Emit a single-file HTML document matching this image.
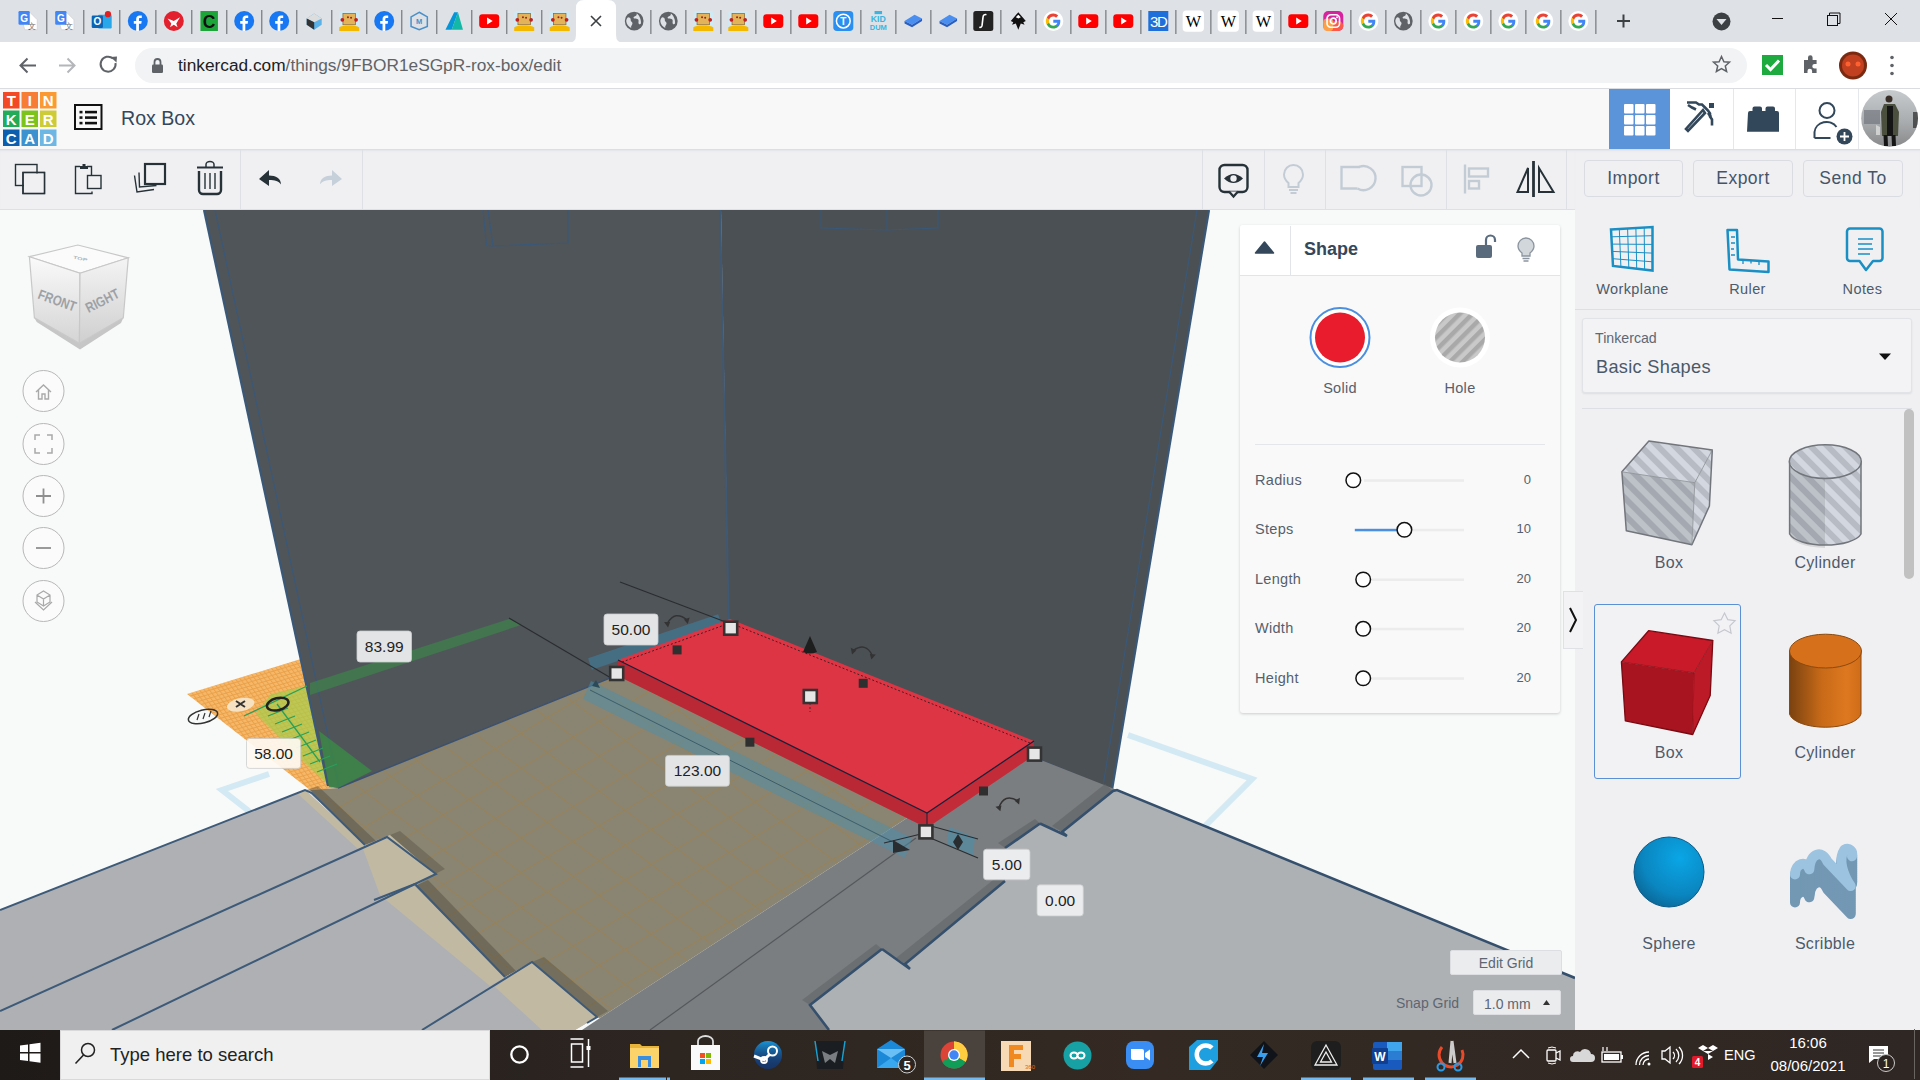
<!DOCTYPE html><html><head><meta charset="utf-8"><style>html,body{margin:0;padding:0;width:1920px;height:1080px;overflow:hidden;background:#fff;font-family:"Liberation Sans",sans-serif}div{box-sizing:border-box}</style></head><body>
<div style="position:absolute;left:0;top:0;width:1920px;height:42px;background:#dee1e6"></div>
<svg style="position:absolute;left:0;top:0" width="1920" height="43">
<path d="M568 43 Q576 43 576 35 V8 Q576 0 584 0 H608 Q616 0 616 8 V35 Q616 43 624 43 Z" fill="#fff"/>
<g transform="translate(28.5,21) scale(1.25) translate(-8,-8)"><path d="M1 1h8l6 6v8H5z" fill="#fff" stroke="#ccc" stroke-width=".5"/><rect x="0" y="0" width="9" height="11" rx="1" fill="#4285f4"/><text x="4.5" y="8.5" font-size="8" font-family="Liberation Sans" font-weight="bold" fill="#fff" text-anchor="middle">G</text><text x="11" y="14" font-size="6" fill="#666" font-family="Liberation Sans" text-anchor="middle">文</text></g>
<g transform="translate(65.2,21) scale(1.25) translate(-8,-8)"><path d="M1 1h8l6 6v8H5z" fill="#fff" stroke="#ccc" stroke-width=".5"/><rect x="0" y="0" width="9" height="11" rx="1" fill="#4285f4"/><text x="4.5" y="8.5" font-size="8" font-family="Liberation Sans" font-weight="bold" fill="#fff" text-anchor="middle">G</text><text x="11" y="14" font-size="6" fill="#666" font-family="Liberation Sans" text-anchor="middle">文</text></g>
<g transform="translate(101.7,21) scale(1.25) translate(-8,-8)"><rect x="5" y="3" width="11" height="11" rx="1" fill="#28a8ea"/><rect x="0" y="3.5" width="9" height="10" rx="1" fill="#0a64b6"/><text x="4.5" y="11.5" font-size="8" font-family="Liberation Sans" font-weight="bold" fill="#fff" text-anchor="middle">O</text><circle cx="13" cy="2.5" r="2.5" fill="#e02020"/></g>
<g transform="translate(137.8,21) scale(1.25) translate(-8,-8)"><circle cx="8" cy="8" r="8" fill="#1877f2"/><path d="M8.9 16V10.2h1.9l.3-2.2H8.9V6.6c0-.6.2-1 1.1-1h1.2V3.6c-.2 0-.9-.1-1.7-.1-1.7 0-2.8 1-2.8 2.9V8H4.8v2.2h1.9V16z" fill="#fff"/></g>
<g transform="translate(173.8,21) scale(1.25) translate(-8,-8)"><circle cx="8" cy="8" r="8" fill="#e3202e"/><path d="M3 6l5 2 5-3-3 5 1 3-3-2-3 2 1-3z" fill="#fff"/></g>
<g transform="translate(209.2,21) scale(1.25) translate(-8,-8)"><rect x="1" y="0" width="14" height="16" fill="#1ea53a"/><text x="8" y="13.5" font-size="14" font-family="Liberation Sans" font-weight="bold" fill="#111" text-anchor="middle">C</text></g>
<g transform="translate(244.2,21) scale(1.25) translate(-8,-8)"><circle cx="8" cy="8" r="8" fill="#1877f2"/><path d="M8.9 16V10.2h1.9l.3-2.2H8.9V6.6c0-.6.2-1 1.1-1h1.2V3.6c-.2 0-.9-.1-1.7-.1-1.7 0-2.8 1-2.8 2.9V8H4.8v2.2h1.9V16z" fill="#fff"/></g>
<g transform="translate(279.2,21) scale(1.25) translate(-8,-8)"><circle cx="8" cy="8" r="8" fill="#1877f2"/><path d="M8.9 16V10.2h1.9l.3-2.2H8.9V6.6c0-.6.2-1 1.1-1h1.2V3.6c-.2 0-.9-.1-1.7-.1-1.7 0-2.8 1-2.8 2.9V8H4.8v2.2h1.9V16z" fill="#fff"/></g>
<g transform="translate(314.2,21) scale(1.25) translate(-8,-8)"><path d="M2 6l6-4 6 4v5l-6 4-6-4z" fill="#5ab2e8"/><path d="M2 6l6-4 6 4-6 3z" fill="#ddd"/><path d="M2 6l6 3v6l-6-4z" fill="#333"/></g>
<g transform="translate(349.2,21) scale(1.25) translate(-8,-8)"><rect x="0" y="0" width="16" height="16" rx="2" fill="#cfeaf5"/><rect x="3" y="2" width="10" height="9" fill="#e3b35a" stroke="#8a6a30" stroke-width=".6"/><circle cx="2.5" cy="7" r="1.5" fill="#c02020"/><circle cx="13.5" cy="7" r="1.5" fill="#c02020"/><circle cx="7" cy="5" r=".8" fill="#a02020"/><circle cx="9.5" cy="5.3" r=".8" fill="#a02020"/><path d="M0 13c2-2 14-2 16 0v3H0z" fill="#f5b800"/></g>
<g transform="translate(384.2,21) scale(1.25) translate(-8,-8)"><circle cx="8" cy="8" r="8" fill="#1877f2"/><path d="M8.9 16V10.2h1.9l.3-2.2H8.9V6.6c0-.6.2-1 1.1-1h1.2V3.6c-.2 0-.9-.1-1.7-.1-1.7 0-2.8 1-2.8 2.9V8H4.8v2.2h1.9V16z" fill="#fff"/></g>
<g transform="translate(419.2,21) scale(1.25) translate(-8,-8)"><path d="M8 1l6.500 3.700v7.600L8 15 1.500 12.300V4.700z" fill="none" stroke="#4a90c8" stroke-width="1.2"/><text x="8" y="10.5" font-size="6" font-family="Liberation Sans" font-weight="bold" fill="#4a90c8" text-anchor="middle">M</text></g>
<g transform="translate(454.2,21) scale(1.25) translate(-8,-8)"><path d="M1 15L8 1h3l-5 14z" fill="#0696d7"/><path d="M6 15l5-14 4 14h-3z" fill="#14b8a6"/></g>
<g transform="translate(489.2,21) scale(1.25) translate(-8,-8)"><rect x="0" y="2.5" width="16" height="11" rx="2.5" fill="#f00"/><path d="M6.3 5.2v5.6L10.8 8z" fill="#fff"/></g>
<g transform="translate(524.2,21) scale(1.25) translate(-8,-8)"><rect x="0" y="0" width="16" height="16" rx="2" fill="#cfeaf5"/><rect x="3" y="2" width="10" height="9" fill="#e3b35a" stroke="#8a6a30" stroke-width=".6"/><circle cx="2.5" cy="7" r="1.5" fill="#c02020"/><circle cx="13.5" cy="7" r="1.5" fill="#c02020"/><circle cx="7" cy="5" r=".8" fill="#a02020"/><circle cx="9.5" cy="5.3" r=".8" fill="#a02020"/><path d="M0 13c2-2 14-2 16 0v3H0z" fill="#f5b800"/></g>
<g transform="translate(559.7,21) scale(1.25) translate(-8,-8)"><rect x="0" y="0" width="16" height="16" rx="2" fill="#cfeaf5"/><rect x="3" y="2" width="10" height="9" fill="#e3b35a" stroke="#8a6a30" stroke-width=".6"/><circle cx="2.5" cy="7" r="1.5" fill="#c02020"/><circle cx="13.5" cy="7" r="1.5" fill="#c02020"/><circle cx="7" cy="5" r=".8" fill="#a02020"/><circle cx="9.5" cy="5.3" r=".8" fill="#a02020"/><path d="M0 13c2-2 14-2 16 0v3H0z" fill="#f5b800"/></g>
<g transform="translate(634.2,21) scale(1.25) translate(-8,-8)"><circle cx="8" cy="8" r="7.5" fill="#5f6368"/><path d="M3 5c1.5 0 2.5 1 2.2 2.2C5 8.400 6.800 8.600 6.600 10 6.400 11.400 5 12 5.600 13.500 3.400 12.500 1.800 10.500 1.600 8 1.800 6.500 2.300 5.600 3 5zM10 2c.300 1.300-.600 2-1.800 2.300-1 .300-1 1.500 0 1.700 1.200.300 2.200-.100 3 .800.800 1-.200 2.200.400 3.300.500.800 1.300.500 1.800-.200.300-2.700-1.100-6.400-3.400-7.900z" fill="#dee1e6"/></g>
<g transform="translate(668.3,21) scale(1.25) translate(-8,-8)"><circle cx="8" cy="8" r="7.5" fill="#5f6368"/><path d="M3 5c1.5 0 2.5 1 2.2 2.2C5 8.400 6.800 8.600 6.600 10 6.400 11.400 5 12 5.600 13.500 3.400 12.500 1.800 10.500 1.600 8 1.800 6.500 2.300 5.600 3 5zM10 2c.300 1.300-.600 2-1.800 2.300-1 .300-1 1.500 0 1.700 1.200.300 2.200-.100 3 .800.800 1-.200 2.200.400 3.300.500.800 1.300.500 1.800-.200.300-2.700-1.100-6.400-3.400-7.900z" fill="#dee1e6"/></g>
<g transform="translate(703.3,21) scale(1.25) translate(-8,-8)"><rect x="0" y="0" width="16" height="16" rx="2" fill="#cfeaf5"/><rect x="3" y="2" width="10" height="9" fill="#e3b35a" stroke="#8a6a30" stroke-width=".6"/><circle cx="2.5" cy="7" r="1.5" fill="#c02020"/><circle cx="13.5" cy="7" r="1.5" fill="#c02020"/><circle cx="7" cy="5" r=".8" fill="#a02020"/><circle cx="9.5" cy="5.3" r=".8" fill="#a02020"/><path d="M0 13c2-2 14-2 16 0v3H0z" fill="#f5b800"/></g>
<g transform="translate(738.3,21) scale(1.25) translate(-8,-8)"><rect x="0" y="0" width="16" height="16" rx="2" fill="#cfeaf5"/><rect x="3" y="2" width="10" height="9" fill="#e3b35a" stroke="#8a6a30" stroke-width=".6"/><circle cx="2.5" cy="7" r="1.5" fill="#c02020"/><circle cx="13.5" cy="7" r="1.5" fill="#c02020"/><circle cx="7" cy="5" r=".8" fill="#a02020"/><circle cx="9.5" cy="5.3" r=".8" fill="#a02020"/><path d="M0 13c2-2 14-2 16 0v3H0z" fill="#f5b800"/></g>
<g transform="translate(773.3,21) scale(1.25) translate(-8,-8)"><rect x="0" y="2.5" width="16" height="11" rx="2.5" fill="#f00"/><path d="M6.3 5.2v5.6L10.8 8z" fill="#fff"/></g>
<g transform="translate(808.3,21) scale(1.25) translate(-8,-8)"><rect x="0" y="2.5" width="16" height="11" rx="2.5" fill="#f00"/><path d="M6.3 5.2v5.6L10.8 8z" fill="#fff"/></g>
<g transform="translate(843.3,21) scale(1.25) translate(-8,-8)"><rect x="0" y="0" width="16" height="16" rx="3" fill="#2a8ff0"/><circle cx="8" cy="8" r="5.500" fill="none" stroke="#fff" stroke-width="1.2"/><text x="8" y="11" font-size="8" font-family="Liberation Sans" font-weight="bold" fill="#fff" text-anchor="middle">T</text></g>
<g transform="translate(878.3,21) scale(1.25) translate(-8,-8)"><text x="8" y="9" font-size="7" font-family="Liberation Sans" font-weight="bold" fill="#3cb4e0" text-anchor="middle">KID</text><text x="8" y="15" font-size="6" font-family="Liberation Sans" font-weight="bold" fill="#3cb4e0" text-anchor="middle">DUM</text><rect x="5" y="0" width="6" height="2.500" fill="#3cb4e0"/></g>
<g transform="translate(913.3,21) scale(1.25) translate(-8,-8)"><path d="M1 8l8-5 6 3-8 5z" fill="#4a8ef0"/><path d="M1 8l6 3 8-5v2l-8 5-6-3z" fill="#2a5fc0"/></g>
<g transform="translate(948.3,21) scale(1.25) translate(-8,-8)"><path d="M1 8l8-5 6 3-8 5z" fill="#4a8ef0"/><path d="M1 8l6 3 8-5v2l-8 5-6-3z" fill="#2a5fc0"/></g>
<g transform="translate(983.3,21) scale(1.25) translate(-8,-8)"><rect x="0" y="0" width="16" height="16" rx="2" fill="#222"/><path d="M10.500 3c-1.500-.5-2.500 .300-2.700 1.800L7 11.500c-.2 1.300-1 1.800-2.200 1.500" stroke="#fff" stroke-width="1.300" fill="none"/></g>
<g transform="translate(1018.3,21) scale(1.25) translate(-8,-8)"><path d="M8 1l6 7-2 1 1 2-3-1-2 5-2-5-3 1 1-2-2-1z" fill="#111"/><path d="M6 5l2-2 2 2-2 1z" fill="#fff"/></g>
<g transform="translate(1053.3,21) scale(1.25) translate(-8,-8)"><circle cx="8" cy="8" r="8" fill="#fff"/><path d="M13.6 8.2c0-.4 0-.8-.1-1.2H8v2.3h3.2c-.1.7-.6 1.4-1.2 1.8v1.5h1.9c1.1-1 1.7-2.6 1.7-4.4z" fill="#4285f4"/><path d="M8 14c1.6 0 2.9-.5 3.9-1.4L10 11.1c-.5.4-1.2.6-2 .6-1.5 0-2.8-1-3.3-2.4H2.8v1.5C3.8 12.8 5.7 14 8 14z" fill="#34a853"/><path d="M4.7 9.3c-.1-.4-.2-.8-.2-1.3s.1-.9.2-1.3V5.2H2.8C2.3 6 2 7 2 8s.3 2 .8 2.8z" fill="#fbbc05"/><path d="M8 4.4c.9 0 1.6.3 2.2.9l1.7-1.7C10.9 2.600 9.6 2 8 2 5.700 2 3.800 3.200 2.800 5.200l1.900 1.500C5.200 5.400 6.500 4.400 8 4.400z" fill="#ea4335"/></g>
<g transform="translate(1088.3,21) scale(1.25) translate(-8,-8)"><rect x="0" y="2.5" width="16" height="11" rx="2.5" fill="#f00"/><path d="M6.3 5.2v5.6L10.8 8z" fill="#fff"/></g>
<g transform="translate(1123.3,21) scale(1.25) translate(-8,-8)"><rect x="0" y="2.5" width="16" height="11" rx="2.5" fill="#f00"/><path d="M6.3 5.2v5.6L10.8 8z" fill="#fff"/></g>
<g transform="translate(1158.3,21) scale(1.25) translate(-8,-8)"><rect x="0" y="0" width="16" height="16" fill="#1e6fd9"/><text x="8" y="13" font-size="12" font-family="Liberation Sans" fill="#fff" text-anchor="middle" letter-spacing="-1">3D</text></g>
<g transform="translate(1193.3,21) scale(1.25) translate(-8,-8)"><rect x="-.5" y="-.5" width="17" height="17" rx="3" fill="#fff"/><text x="8" y="13" font-size="13" font-family="Liberation Serif" fill="#000" text-anchor="middle">W</text></g>
<g transform="translate(1228.3,21) scale(1.25) translate(-8,-8)"><rect x="-.5" y="-.5" width="17" height="17" rx="3" fill="#fff"/><text x="8" y="13" font-size="13" font-family="Liberation Serif" fill="#000" text-anchor="middle">W</text></g>
<g transform="translate(1263.3,21) scale(1.25) translate(-8,-8)"><rect x="-.5" y="-.5" width="17" height="17" rx="3" fill="#fff"/><text x="8" y="13" font-size="13" font-family="Liberation Serif" fill="#000" text-anchor="middle">W</text></g>
<g transform="translate(1298.3,21) scale(1.25) translate(-8,-8)"><rect x="0" y="2.5" width="16" height="11" rx="2.5" fill="#f00"/><path d="M6.3 5.2v5.6L10.8 8z" fill="#fff"/></g>
<g transform="translate(1333.3,21) scale(1.25) translate(-8,-8)"><rect x="0" y="0" width="16" height="16" rx="4" fill="#d6249f"/><rect x="0" y="8" width="16" height="8" rx="4" fill="#fd5949"/><rect x="0" y="6" width="8" height="10" rx="3" fill="#fdb34a" opacity=".8"/><rect x="3" y="3" width="10" height="10" rx="3" fill="none" stroke="#fff" stroke-width="1.300"/><circle cx="8" cy="8" r="2.300" fill="none" stroke="#fff" stroke-width="1.300"/><circle cx="11" cy="5" r=".8" fill="#fff"/></g>
<g transform="translate(1368.3,21) scale(1.25) translate(-8,-8)"><circle cx="8" cy="8" r="8" fill="#fff"/><path d="M13.6 8.2c0-.4 0-.8-.1-1.2H8v2.3h3.2c-.1.7-.6 1.4-1.2 1.8v1.5h1.9c1.1-1 1.7-2.6 1.7-4.4z" fill="#4285f4"/><path d="M8 14c1.6 0 2.9-.5 3.9-1.4L10 11.1c-.5.4-1.2.6-2 .6-1.5 0-2.8-1-3.3-2.4H2.8v1.5C3.8 12.8 5.7 14 8 14z" fill="#34a853"/><path d="M4.7 9.3c-.1-.4-.2-.8-.2-1.3s.1-.9.2-1.3V5.2H2.8C2.3 6 2 7 2 8s.3 2 .8 2.8z" fill="#fbbc05"/><path d="M8 4.4c.9 0 1.6.3 2.2.9l1.7-1.7C10.9 2.600 9.6 2 8 2 5.700 2 3.800 3.200 2.800 5.200l1.900 1.500C5.200 5.400 6.500 4.400 8 4.400z" fill="#ea4335"/></g>
<g transform="translate(1403.3,21) scale(1.25) translate(-8,-8)"><circle cx="8" cy="8" r="7.5" fill="#5f6368"/><path d="M3 5c1.5 0 2.5 1 2.2 2.2C5 8.400 6.800 8.600 6.600 10 6.400 11.400 5 12 5.600 13.500 3.400 12.500 1.800 10.500 1.600 8 1.800 6.500 2.300 5.600 3 5zM10 2c.300 1.300-.600 2-1.800 2.300-1 .300-1 1.500 0 1.700 1.200.300 2.200-.100 3 .800.800 1-.200 2.200.400 3.300.500.800 1.300.500 1.800-.200.300-2.700-1.100-6.400-3.400-7.900z" fill="#dee1e6"/></g>
<g transform="translate(1438.3,21) scale(1.25) translate(-8,-8)"><circle cx="8" cy="8" r="8" fill="#fff"/><path d="M13.6 8.2c0-.4 0-.8-.1-1.2H8v2.3h3.2c-.1.7-.6 1.4-1.2 1.8v1.5h1.9c1.1-1 1.7-2.6 1.7-4.4z" fill="#4285f4"/><path d="M8 14c1.6 0 2.9-.5 3.9-1.4L10 11.1c-.5.4-1.2.6-2 .6-1.5 0-2.8-1-3.3-2.4H2.8v1.5C3.8 12.8 5.7 14 8 14z" fill="#34a853"/><path d="M4.7 9.3c-.1-.4-.2-.8-.2-1.3s.1-.9.2-1.3V5.2H2.8C2.3 6 2 7 2 8s.3 2 .8 2.8z" fill="#fbbc05"/><path d="M8 4.4c.9 0 1.6.3 2.2.9l1.7-1.7C10.9 2.600 9.6 2 8 2 5.700 2 3.800 3.200 2.800 5.200l1.900 1.500C5.200 5.400 6.500 4.400 8 4.400z" fill="#ea4335"/></g>
<g transform="translate(1473.3,21) scale(1.25) translate(-8,-8)"><circle cx="8" cy="8" r="8" fill="#fff"/><path d="M13.6 8.2c0-.4 0-.8-.1-1.2H8v2.3h3.2c-.1.7-.6 1.4-1.2 1.8v1.5h1.9c1.1-1 1.7-2.6 1.7-4.4z" fill="#4285f4"/><path d="M8 14c1.6 0 2.9-.5 3.9-1.4L10 11.1c-.5.4-1.2.6-2 .6-1.5 0-2.8-1-3.3-2.4H2.8v1.5C3.8 12.8 5.7 14 8 14z" fill="#34a853"/><path d="M4.7 9.3c-.1-.4-.2-.8-.2-1.3s.1-.9.2-1.3V5.2H2.8C2.3 6 2 7 2 8s.3 2 .8 2.8z" fill="#fbbc05"/><path d="M8 4.4c.9 0 1.6.3 2.2.9l1.7-1.7C10.9 2.600 9.6 2 8 2 5.700 2 3.800 3.200 2.800 5.200l1.900 1.500C5.200 5.400 6.500 4.400 8 4.400z" fill="#ea4335"/></g>
<g transform="translate(1508.3,21) scale(1.25) translate(-8,-8)"><circle cx="8" cy="8" r="8" fill="#fff"/><path d="M13.6 8.2c0-.4 0-.8-.1-1.2H8v2.3h3.2c-.1.7-.6 1.4-1.2 1.8v1.5h1.9c1.1-1 1.7-2.6 1.7-4.4z" fill="#4285f4"/><path d="M8 14c1.6 0 2.9-.5 3.9-1.4L10 11.1c-.5.4-1.2.6-2 .6-1.5 0-2.8-1-3.3-2.4H2.8v1.5C3.8 12.8 5.7 14 8 14z" fill="#34a853"/><path d="M4.7 9.3c-.1-.4-.2-.8-.2-1.3s.1-.9.2-1.3V5.2H2.8C2.3 6 2 7 2 8s.3 2 .8 2.8z" fill="#fbbc05"/><path d="M8 4.4c.9 0 1.6.3 2.2.9l1.7-1.7C10.9 2.600 9.6 2 8 2 5.700 2 3.800 3.200 2.800 5.200l1.900 1.500C5.200 5.400 6.500 4.400 8 4.400z" fill="#ea4335"/></g>
<g transform="translate(1543.3,21) scale(1.25) translate(-8,-8)"><circle cx="8" cy="8" r="8" fill="#fff"/><path d="M13.6 8.2c0-.4 0-.8-.1-1.2H8v2.3h3.2c-.1.7-.6 1.4-1.2 1.8v1.5h1.9c1.1-1 1.7-2.6 1.7-4.4z" fill="#4285f4"/><path d="M8 14c1.6 0 2.9-.5 3.9-1.4L10 11.1c-.5.4-1.2.6-2 .6-1.5 0-2.8-1-3.3-2.4H2.8v1.5C3.8 12.8 5.7 14 8 14z" fill="#34a853"/><path d="M4.7 9.3c-.1-.4-.2-.8-.2-1.3s.1-.9.2-1.3V5.2H2.8C2.3 6 2 7 2 8s.3 2 .8 2.8z" fill="#fbbc05"/><path d="M8 4.4c.9 0 1.6.3 2.2.9l1.7-1.7C10.9 2.600 9.6 2 8 2 5.700 2 3.800 3.200 2.800 5.200l1.900 1.500C5.200 5.400 6.500 4.400 8 4.400z" fill="#ea4335"/></g>
<g transform="translate(1578.3,21) scale(1.25) translate(-8,-8)"><circle cx="8" cy="8" r="8" fill="#fff"/><path d="M13.6 8.2c0-.4 0-.8-.1-1.2H8v2.3h3.2c-.1.7-.6 1.4-1.2 1.8v1.5h1.9c1.1-1 1.7-2.6 1.7-4.4z" fill="#4285f4"/><path d="M8 14c1.6 0 2.9-.5 3.9-1.4L10 11.1c-.5.4-1.2.6-2 .6-1.5 0-2.8-1-3.3-2.4H2.8v1.5C3.8 12.8 5.7 14 8 14z" fill="#34a853"/><path d="M4.7 9.3c-.1-.4-.2-.8-.2-1.3s.1-.9.2-1.3V5.2H2.8C2.3 6 2 7 2 8s.3 2 .8 2.8z" fill="#fbbc05"/><path d="M8 4.4c.9 0 1.6.3 2.2.9l1.7-1.7C10.9 2.600 9.6 2 8 2 5.700 2 3.800 3.200 2.800 5.200l1.900 1.500C5.200 5.400 6.500 4.400 8 4.400z" fill="#ea4335"/></g>
<rect x="46.1" y="10" width="1.3" height="24" fill="#7d8186"/>
<rect x="83.1" y="10" width="1.3" height="24" fill="#7d8186"/>
<rect x="119.1" y="10" width="1.3" height="24" fill="#7d8186"/>
<rect x="155.2" y="10" width="1.3" height="24" fill="#7d8186"/>
<rect x="191.1" y="10" width="1.3" height="24" fill="#7d8186"/>
<rect x="226.1" y="10" width="1.3" height="24" fill="#7d8186"/>
<rect x="261.1" y="10" width="1.3" height="24" fill="#7d8186"/>
<rect x="296.1" y="10" width="1.3" height="24" fill="#7d8186"/>
<rect x="331.1" y="10" width="1.3" height="24" fill="#7d8186"/>
<rect x="366.1" y="10" width="1.3" height="24" fill="#7d8186"/>
<rect x="401.1" y="10" width="1.3" height="24" fill="#7d8186"/>
<rect x="436.1" y="10" width="1.3" height="24" fill="#7d8186"/>
<rect x="471.1" y="10" width="1.3" height="24" fill="#7d8186"/>
<rect x="506.1" y="10" width="1.3" height="24" fill="#7d8186"/>
<rect x="541.1" y="10" width="1.3" height="24" fill="#7d8186"/>
<rect x="650.2" y="10" width="1.3" height="24" fill="#7d8186"/>
<rect x="685.2" y="10" width="1.3" height="24" fill="#7d8186"/>
<rect x="720.2" y="10" width="1.3" height="24" fill="#7d8186"/>
<rect x="755.2" y="10" width="1.3" height="24" fill="#7d8186"/>
<rect x="790.2" y="10" width="1.3" height="24" fill="#7d8186"/>
<rect x="825.2" y="10" width="1.3" height="24" fill="#7d8186"/>
<rect x="860.2" y="10" width="1.3" height="24" fill="#7d8186"/>
<rect x="895.2" y="10" width="1.3" height="24" fill="#7d8186"/>
<rect x="930.2" y="10" width="1.3" height="24" fill="#7d8186"/>
<rect x="965.2" y="10" width="1.3" height="24" fill="#7d8186"/>
<rect x="1000.2" y="10" width="1.3" height="24" fill="#7d8186"/>
<rect x="1035.2" y="10" width="1.3" height="24" fill="#7d8186"/>
<rect x="1070.2" y="10" width="1.3" height="24" fill="#7d8186"/>
<rect x="1105.2" y="10" width="1.3" height="24" fill="#7d8186"/>
<rect x="1140.2" y="10" width="1.3" height="24" fill="#7d8186"/>
<rect x="1175.2" y="10" width="1.3" height="24" fill="#7d8186"/>
<rect x="1210.2" y="10" width="1.3" height="24" fill="#7d8186"/>
<rect x="1245.2" y="10" width="1.3" height="24" fill="#7d8186"/>
<rect x="1280.2" y="10" width="1.3" height="24" fill="#7d8186"/>
<rect x="1315.2" y="10" width="1.3" height="24" fill="#7d8186"/>
<rect x="1350.2" y="10" width="1.3" height="24" fill="#7d8186"/>
<rect x="1385.2" y="10" width="1.3" height="24" fill="#7d8186"/>
<rect x="1420.2" y="10" width="1.3" height="24" fill="#7d8186"/>
<rect x="1455.2" y="10" width="1.3" height="24" fill="#7d8186"/>
<rect x="1490.2" y="10" width="1.3" height="24" fill="#7d8186"/>
<rect x="1525.2" y="10" width="1.3" height="24" fill="#7d8186"/>
<rect x="1560.2" y="10" width="1.3" height="24" fill="#7d8186"/>
<rect x="1595.2" y="10" width="1.3" height="24" fill="#7d8186"/>
<path d="M591 16 L601 26 M601 16 L591 26" stroke="#3c4043" stroke-width="1.6"/>
<path d="M1617 21h13M1623.500 14.500v13" stroke="#3c4043" stroke-width="2"/>
<circle cx="1721.500" cy="21.500" r="9" fill="#3c4043"/><path d="M1716.500 19h10l-5 6z" fill="#dee1e6"/>
<path d="M1772 18.500h11" stroke="#111" stroke-width="1"/>
<rect x="1827.500" y="15.500" width="10" height="10" fill="none" stroke="#111" stroke-width="1"/><path d="M1829.500 15.500v-2.500h10.500v10.500h-2.500" fill="none" stroke="#111" stroke-width="1"/>
<path d="M1885 13l12 12M1897 13l-12 12" stroke="#111" stroke-width="1"/>
</svg>
<div style="position:absolute;left:0;top:42px;width:1920px;height:47px;background:#fff;border-bottom:1px solid #dadce0"></div>
<div style="position:absolute;left:135px;top:48px;width:1612px;height:35px;border-radius:18px;background:#f1f3f4"></div>
<svg style="position:absolute;left:0;top:42px" width="1920" height="46">
<path d="M36 23.500H21M27.500 16.500l-7 7 7 7" fill="none" stroke="#5f6368" stroke-width="2"/>
<path d="M59 23.500h15M67.500 16.500l7 7-7 7" fill="none" stroke="#b4b6b9" stroke-width="2"/>
<path d="M115.500 21A7.500 7.500 0 1 1 113 16.500" fill="none" stroke="#5f6368" stroke-width="2"/><path d="M110.500 15L117 14.500 116.500 20.500z" fill="#5f6368"/>
<rect x="152" y="22.500" width="11" height="8.500" rx="1.200" fill="#5f6368"/><path d="M154.500 23v-3a3 3 0 0 1 6 0v3" fill="none" stroke="#5f6368" stroke-width="1.800"/>
<path d="M1721.500 14.500l2.400 5.200 5.600.5-4.200 3.800 1.300 5.500-5.100-3-5.100 3 1.300-5.500-4.200-3.800 5.600-.5z" fill="none" stroke="#5f6368" stroke-width="1.500"/>
<rect x="1762" y="13" width="21" height="20" fill="#1faa3f"/><path d="M1766 23l4.500 4.500 8.500-9" fill="none" stroke="#fff" stroke-width="3"/>
<path d="M1804 18h4v-2.500a2.300 2.300 0 0 1 4.600 0V18h4v4h-2a2.300 2.300 0 0 0 0 4.600h2V31h-4.500v-2a2.300 2.300 0 0 0-4.600 0v2H1804z" fill="#5f6368"/>
<circle cx="1853" cy="23.500" r="14" fill="#7a2a10"/><circle cx="1853" cy="23.500" r="11" fill="#c04020"/><circle cx="1848" cy="22" r="2.500" fill="#ff6030"/><circle cx="1858" cy="22" r="2.500" fill="#ff6030"/>
<circle cx="1892" cy="15.500" r="1.800" fill="#5f6368"/><circle cx="1892" cy="23.500" r="1.800" fill="#5f6368"/><circle cx="1892" cy="31.500" r="1.800" fill="#5f6368"/>
</svg>
<div style="position:absolute;left:178px;top:53px;font-size:17.3px;line-height:24px;color:#5f6368;white-space:nowrap"><span style="color:#202124">tinkercad.com</span>/things/9FBOR1eSGpR-rox-box/edit</div>
<div style="position:absolute;left:0;top:89px;width:1920px;height:61px;background:#f8f8f8;border-bottom:1px solid #dcdee6"></div>
<div style="position:absolute;left:1670px;top:89px;width:250px;height:60px;background:#fff"></div>
<svg style="position:absolute;left:0;top:0" width="1920" height="212">
<rect x="3" y="92" width="16.5" height="16.5" fill="#f34a25"/>
<text x="11.25" y="106" font-size="15" font-weight="bold" font-family="Liberation Sans" fill="#fff" text-anchor="middle">T</text>
<rect x="21.5" y="92" width="16.5" height="16.5" fill="#f67d33"/>
<text x="29.75" y="106" font-size="15" font-weight="bold" font-family="Liberation Sans" fill="#fff" text-anchor="middle">I</text>
<rect x="40" y="92" width="16.5" height="16.5" fill="#fb9a35"/>
<text x="48.25" y="106" font-size="15" font-weight="bold" font-family="Liberation Sans" fill="#fff" text-anchor="middle">N</text>
<rect x="3" y="110.5" width="16.5" height="16.5" fill="#22ab58"/>
<text x="11.25" y="124.5" font-size="15" font-weight="bold" font-family="Liberation Sans" fill="#fff" text-anchor="middle">K</text>
<rect x="21.5" y="110.5" width="16.5" height="16.5" fill="#7cc31b"/>
<text x="29.75" y="124.5" font-size="15" font-weight="bold" font-family="Liberation Sans" fill="#fff" text-anchor="middle">E</text>
<rect x="40" y="110.5" width="16.5" height="16.5" fill="#cdcb38"/>
<text x="48.25" y="124.5" font-size="15" font-weight="bold" font-family="Liberation Sans" fill="#fff" text-anchor="middle">R</text>
<rect x="3" y="129.5" width="16.5" height="16.5" fill="#0b5fae"/>
<text x="11.25" y="143.5" font-size="15" font-weight="bold" font-family="Liberation Sans" fill="#fff" text-anchor="middle">C</text>
<rect x="21.5" y="129.5" width="16.5" height="16.5" fill="#3c91cf"/>
<text x="29.75" y="143.5" font-size="15" font-weight="bold" font-family="Liberation Sans" fill="#fff" text-anchor="middle">A</text>
<rect x="40" y="129.5" width="16.5" height="16.5" fill="#6cb7e3"/>
<text x="48.25" y="143.5" font-size="15" font-weight="bold" font-family="Liberation Sans" fill="#fff" text-anchor="middle">D</text>
<rect x="75" y="105" width="26.500" height="24" fill="none" stroke="#111" stroke-width="2"/>
<rect x="79.500" y="110.8" width="3" height="2.600" fill="#111"/><rect x="85" y="110.8" width="12" height="2.600" fill="#111"/>
<rect x="79.500" y="116.3" width="3" height="2.600" fill="#111"/><rect x="85" y="116.3" width="12" height="2.600" fill="#111"/>
<rect x="79.500" y="121.8" width="3" height="2.600" fill="#111"/><rect x="85" y="121.8" width="12" height="2.600" fill="#111"/>
<rect x="1609" y="89" width="61" height="60" fill="#5c94d9"/>
<rect x="1624" y="104" width="9.500" height="9.500" rx="1" fill="#fff"/>
<rect x="1635" y="104" width="9.500" height="9.500" rx="1" fill="#fff"/>
<rect x="1646" y="104" width="9.500" height="9.500" rx="1" fill="#fff"/>
<rect x="1624" y="115" width="9.500" height="9.500" rx="1" fill="#fff"/>
<rect x="1635" y="115" width="9.500" height="9.500" rx="1" fill="#fff"/>
<rect x="1646" y="115" width="9.500" height="9.500" rx="1" fill="#fff"/>
<rect x="1624" y="126" width="9.500" height="9.500" rx="1" fill="#fff"/>
<rect x="1635" y="126" width="9.500" height="9.500" rx="1" fill="#fff"/>
<rect x="1646" y="126" width="9.500" height="9.500" rx="1" fill="#fff"/>
<rect x="1733" y="89" width="1" height="60" fill="#e4e7eb"/>
<rect x="1795" y="89" width="1" height="60" fill="#e4e7eb"/>
<rect x="1858" y="89" width="1" height="60" fill="#e4e7eb"/>
<g fill="none" stroke="#33475b" stroke-width="2.600"><path d="M1687 102.500h9l3 2h3l3 3 3 3 2 3v3l2 3v6"/><path d="M1688 105l4 2.500 4 2"/><path d="M1708 113l3 4"/><path d="M1703 110l-17 19 2 2 17-18z"/></g><rect x="1709" y="103" width="5" height="5" fill="#33475b"/>
<path d="M1748 113a2 2 0 0 1 2-2h2.500v-2.500a2 2 0 0 1 2-2h5.500a2 2 0 0 1 2 2v2.500h3.500v-2.500a2 2 0 0 1 2-2h5.500a2 2 0 0 1 2 2v2.500h2a2 2 0 0 1 2 2v18.700h-32z" fill="#33475b"/>
<circle cx="1827" cy="110.500" r="7.500" fill="none" stroke="#33475b" stroke-width="2"/><path d="M1814.500 138v-6a12 11 0 0 1 22-5" fill="none" stroke="#33475b" stroke-width="2"/><path d="M1814.500 138h16" stroke="#33475b" stroke-width="2"/>
<circle cx="1844.500" cy="136.500" r="8" fill="#33475b"/><path d="M1840 136.500h9M1844.500 132v9" stroke="#fff" stroke-width="1.800"/>
<defs><linearGradient id="avg" x1="0" y1="0" x2="0" y2="1"><stop offset="0" stop-color="#c9cccf"/><stop offset=".55" stop-color="#a9acae"/><stop offset="1" stop-color="#858688"/></linearGradient><clipPath id="avc"><circle cx="1889.600" cy="118.300" r="28.400"/></clipPath></defs>
<g clip-path="url(#avc)"><rect x="1860" y="89" width="60" height="60" fill="url(#avg)"/><rect x="1864" y="110" width="16" height="14" fill="#6a6e76" opacity=".6"/><rect x="1913" y="112" width="6" height="16" fill="#2a2a2a" opacity=".7"/>
<path d="M1884 104h11l4 8-1 24h-16l-1-24z" fill="#4a4f3e"/><rect x="1887" y="106" width="6" height="30" fill="#151515"/><path d="M1883.500 135h4l.5 11h-4zM1891.500 135h4l.5 11h-4z" fill="#151515"/><circle cx="1889" cy="99" r="3.500" fill="#3a2e28"/><path d="M1876 125l4 2v8h-4z" fill="#dcdcdc" opacity=".8"/></g>
</svg>
<div style="position:absolute;left:121px;top:103px;font-size:19.6px;line-height:30px;color:#34475b;white-space:nowrap">Rox Box</div>
<div style="position:absolute;left:0;top:150px;width:1575px;height:60px;background:#f0f0f3;border-bottom:1px solid #dde0e5;box-shadow:inset 0 2px 2px -1px #e2e4ea"></div>
<div style="position:absolute;left:1575px;top:150px;width:345px;height:60px;background:#f0f0f3;box-shadow:inset 0 2px 2px -1px #e2e4ea"></div>
<svg style="position:absolute;left:0;top:150px" width="1920" height="60">
<rect x="240" y="0" width="1" height="59" fill="#dde0e5"/>
<rect x="362" y="0" width="1" height="59" fill="#dde0e5"/>
<rect x="1202" y="0" width="1" height="59" fill="#dde0e5"/>
<rect x="1264" y="0" width="1" height="59" fill="#dde0e5"/>
<rect x="1325" y="0" width="1" height="59" fill="#dde0e5"/>
<rect x="1446" y="0" width="1" height="59" fill="#dde0e5"/>
<rect x="1566" y="0" width="1" height="59" fill="#dde0e5"/>
<g fill="none" stroke="#263238" stroke-width="1.400"><rect x="15.500" y="14.500" width="21.500" height="21"/><rect x="23" y="22.500" width="21.500" height="21"/></g>
<rect x="24" y="23.500" width="19.500" height="19" fill="#f0f0f3"/>
<rect x="23" y="22.500" width="21.500" height="21" fill="none" stroke="#263238" stroke-width="1.400"/>
<g fill="none" stroke="#263238" stroke-width="1.400"><path d="M80 16.500h-4.500v27h16.500v-2"/><path d="M87 16.500h4.500v9"/><rect x="87.500" y="25.500" width="13.500" height="13"/></g><path d="M80 19h8v-3h-2.500v-2h-3v2H80z" fill="#263238"/>
<g fill="none" stroke="#263238"><rect x="145" y="14" width="20" height="20" stroke-width="2.200"/><path d="M139 22.500l.5 14.500 17-1.500" stroke-width="1.400"/><path d="M134.500 25.500l2.500 16.500 17-2.500" stroke-width="1.400"/></g>
<g fill="none" stroke="#263238" transform="translate(0,2)"><path d="M197 15.500h26" stroke-width="2"/><path d="M206 15v-2.500a4 3 0 0 1 8 0V15" stroke-width="1.500"/><path d="M199 19v19a4 4 0 0 0 4 4h14a4 4 0 0 0 4-4V19" stroke-width="2.400"/><path d="M205 21v16M210 21v16M215 21v16" stroke-width="1.400"/></g>
<path d="M259 29l10-9v5.500c7 0 12 3 12 9-2.500-3.500-6-4.500-12-4.500v6z" fill="#263238"/>
<path d="M342 29l-10-9v5.500c-7 0-12 3-12 9 2.500-3.500 6-4.500 12-4.500v6z" fill="#c5d0da"/>
<rect x="1219.500" y="15" width="28" height="27" rx="5" fill="none" stroke="#263238" stroke-width="2.400"/><path d="M1229 41.500l4.500 5 4.500-5" fill="#f0f0f3" stroke="#263238" stroke-width="2.200"/><path d="M1224 28.500q9.500-9 19 0q-9.500 9-19 0z" fill="#263238"/><circle cx="1233.500" cy="28.500" r="3.200" fill="#f0f0f3"/>
<g fill="none" stroke="#c3ccd5" stroke-width="2"><path d="M1288.500 37v-4c-3-2.500-4.500-5-4.500-8.500a9.500 9.500 0 0 1 19 0c0 3.500-1.500 6-4.500 8.500v4z"/><path d="M1289 40h9M1290.500 43h6"/></g>
<g fill="none" stroke="#c3ccd5" stroke-width="2.400"><path d="M1360 17h-18.500v21.500h16"/><path d="M1359 17a12 12 0 1 1-1.500 21.500"/></g>
<g fill="none" stroke="#c3ccd5" stroke-width="2.400"><rect x="1402.500" y="17" width="19" height="19"/><circle cx="1421" cy="35" r="10.500"/></g>
<g fill="none" stroke="#c3ccd5" stroke-width="2.400"><path d="M1465 14.500v29"/><rect x="1469" y="18.500" width="19" height="8"/><rect x="1469" y="31" width="10" height="7.500"/></g>
<g fill="none" stroke="#263238" stroke-width="2"><path d="M1533.500 11v36" stroke-width="2.800"/><path d="M1528 42h-10.500l10.500-24z"/><path d="M1539 42h14.500l-14.500-24z"/></g>
</svg>
<div style="position:absolute;left:1584px;top:160px;width:99px;height:37px;border:1px solid #d9dde3;border-radius:4px;color:#44556a;font-size:17.5px;line-height:34px;text-align:center;letter-spacing:0.5px">Import</div>
<div style="position:absolute;left:1693px;top:160px;width:100px;height:37px;border:1px solid #d9dde3;border-radius:4px;color:#44556a;font-size:17.5px;line-height:34px;text-align:center;letter-spacing:0.5px">Export</div>
<div style="position:absolute;left:1803px;top:160px;width:100px;height:37px;border:1px solid #d9dde3;border-radius:4px;color:#44556a;font-size:17.5px;line-height:34px;text-align:center;letter-spacing:0.5px">Send To</div>
<svg style="position:absolute;left:0;top:0" width="1575" height="1030" viewBox="0 0 1575 1030">
<defs>
<clipPath id="vp"><rect x="0" y="210" width="1575" height="820"/></clipPath>
<pattern id="fgrid" patternUnits="userSpaceOnUse" width="26" height="26" patternTransform="matrix(1,-0.6,1,0.74,0,0)">
<rect width="26" height="26" fill="#8a8572"/><path d="M0 0.5H26M0.5 0V26" stroke="#96825a" stroke-width="1"/></pattern>
<pattern id="ogrid" patternUnits="userSpaceOnUse" width="4" height="4" patternTransform="matrix(1,-0.3,0.6,0.8,0,0)">
<rect width="4" height="4" fill="#f4b868"/><path d="M0 0.5H4M0.5 0V4" stroke="#eca04a" stroke-width="1"/></pattern>
</defs>
<g clip-path="url(#vp)">
<rect x="0" y="210" width="1575" height="820" fill="#f8f9f9"/>
<path d="M269 774L222 790 250 812" fill="none" stroke="#d3e9f3" stroke-width="6"/>
<path d="M1128 735L1252 779 1205 826" fill="none" stroke="#d3e9f3" stroke-width="6"/>
<polygon points="187,694 301,659 338,788 310,790" fill="url(#ogrid)"/>
<polygon points="271,694 307,686 320,731 330,786 314,772 256,714" fill="#9fd04a" opacity="0.65"/>
<polygon points="204,210 721,210 729,630 338,788 328,786" fill="#50555a"/>
<polygon points="721,210 1209,210 1112,790 729,630" fill="#4b5054"/>
<path d="M204 210L328 786" stroke="#3a5878" stroke-width="2.200"/>
<path d="M215 210L339 787" stroke="#3a5878" stroke-width="1.200"/>
<path d="M1209 210L1112 790" stroke="#3a5878" stroke-width="2.200"/>
<path d="M1197 210L1103 786" stroke="#3a5878" stroke-width="1.200"/>
<path d="M720 210L729 630" stroke="#3f5874" stroke-width="2"/>
<path d="M488 210L493 246 568 243 568 210M483 210L486.500 245.500 493 246" fill="none" stroke="#3a5878" stroke-width="1.200"/>
<path d="M821 210L821 228 887 230 938 228 938 210M887 210V230" fill="none" stroke="#3a5878" stroke-width="1.200"/>
<polygon points="310,790 338,788 729,630 1013,749 600,1018 597,1017 532,962 505,977 415,884 436,874 387,837 365,845" fill="url(#fgrid)"/>
<path d="M338 788L729 630 1112 790" fill="none" stroke="#3a5070" stroke-width="1.500"/>
<polygon points="1013,749 1117,790 1113,791 1062,832 1040,823.5 1005,848 1005,881 905,964 882,949 810,1005 829,1030 582,1030 600,1018" fill="#7b7e81"/>
<path d="M916 838L650 1030" stroke="#55585c" stroke-width="1.200"/>
<polygon points="1105,784 1113,791 1062,832 1052,826" fill="#5f6266" opacity="0.6"/>
<polygon points="1035,819 1040,823.5 1005,848 998,843" fill="#5f6266" opacity="0.6"/>
<polygon points="998,876 1005,881 905,964 896,958" fill="#5f6266" opacity="0.55"/>
<polygon points="876,944 882,949 810,1005 802,1000" fill="#5f6266" opacity="0.55"/>
<polygon points="1113,791 1117,790 1575,978 1575,1030 829,1030 810,1005 882,949 905,964 1005,881 1005,848 1040,823.5 1062,832" fill="#aeb1b4"/>
<path d="M1575 978L1117 790 1113 791 1062 832 1067 836M1040 823.500L1067 836M1040 823.500L1005 848M1005 881L905 964 910 969M882 949L910 969M882 949L810 1005 829 1030" fill="none" stroke="#35506c" stroke-width="2.600"/>
<polygon points="0,910 305,790 365,845 387,837 436,874 415,884 505,977 532,962 597,1017 575,1030 0,1030" fill="#aeb0b4"/>
<polygon points="298,794 305,790 366,845 358,849" fill="#c2b9a3"/>
<polygon points="362,846 390,835 435,874 415,886 380,895" fill="#c2b9a3"/>
<polygon points="380,895 415,886 505,977 490,986" fill="#c2b9a3"/>
<polygon points="495,987 532,962 597,1017 587,1023 575,1030 542,1030" fill="#c2b9a3"/>
<polygon points="306,790 366,845 376,841 318,786" fill="#3e3a30" opacity="0.35"/>
<polygon points="390,835 435,874 445,869 400,831" fill="#3e3a30" opacity="0.3"/>
<polygon points="415,886 505,977 516,971 428,880" fill="#3e3a30" opacity="0.35"/>
<polygon points="532,962 597,1017 608,1011 544,957" fill="#3e3a30" opacity="0.3"/>
<g fill="none" stroke="#3d5a78" stroke-width="2">
<path d="M0 910L305 790 312 793 365 845"/>
<path d="M0 1011L387 837 436 874 415 884 374 900"/>
<path d="M112 1030L415 884 505 977"/>
<path d="M422 1030L532 962 597 1017 587 1023"/>
</g>
<polygon points="310,683 509,619 521,625 310,695" fill="#3a8a46" opacity="0.6"/>
<polygon points="319,731 372,771 338,788 329,787" fill="#3a8a46" opacity="0.8"/>
<g stroke="#2aa05a" stroke-width="1.300">
<path d="M244 716L307 686"/><path d="M277 704L320 762"/>
<path d="M268 716L288 708"/>
<path d="M275 724L295 716"/>
<path d="M282 732L302 724"/>
<path d="M289 740L309 732"/>
<path d="M296 748L316 740"/>
<path d="M303 756L323 748"/>
<path d="M310 764L330 756"/>
<path d="M317 772L337 764"/>
</g>
<ellipse cx="203" cy="716.500" rx="15" ry="6.500" transform="rotate(-14 203 716.5)" fill="none" stroke="#333" stroke-width="1.500"/><path d="M197 720l2-6M203 719l2-6M209 717l2-6" stroke="#333" stroke-width="1.200"/>
<ellipse cx="240.700" cy="704.700" rx="14" ry="6.500" transform="rotate(-12 240.7 704.7)" fill="#f6e2c2"/><path d="M236 701l9 6M245 701l-9 6" stroke="#333" stroke-width="2"/>
<ellipse cx="277.700" cy="704.100" rx="11" ry="6" transform="rotate(-14 277.7 704.1)" fill="none" stroke="#222" stroke-width="2.500"/>
<polygon points="588.1,658.3 718.1,614.3 721.9,625.7 591.9,669.7" fill="#3f7f9e" opacity="0.6"/>
<polygon points="591,681 912,838 905,858 583,699" fill="#4a8fac" opacity="0.5"/>
<polygon points="949,826.7 975,837.6 973,855 947,844" fill="#4a8fac" opacity="0.6"/>
<path d="M590 690L905 848" stroke="#2a4a5a" stroke-width="1" opacity="0.7"/>
<polygon points="618,660 927,813 927,828 624,679 617,676" fill="#bb2835"/>
<polygon points="927,813 1034,741 1033,756 927,828" fill="#c42b39"/>
<polygon points="618,660 730,619 1034,741 927,813" fill="#de3545"/>
<path d="M618 660L927 813 1034 741" fill="none" stroke="#1a2038" stroke-width="1.300"/>
<path d="M927 813V828" stroke="#1a2038" stroke-width="1"/>
<path d="M622 662L730 623 1030 743" fill="none" stroke="#4a1a20" stroke-width="1" stroke-dasharray="2 2"/>
<g stroke="#2a2d30" stroke-width="1.200" fill="none">
<path d="M509 618L611 678"/><path d="M620 582L731 624"/>
<path d="M928 837L978 858"/><path d="M931 826L978 839"/>
<path d="M884 843L925 833"/>
</g>
<rect x="724.2" y="621.7" width="13" height="13" fill="#e6e6e6" stroke="#333" stroke-width="2.600"/>
<rect x="610.2" y="667.0" width="13" height="13" fill="#e6e6e6" stroke="#333" stroke-width="2.600"/>
<rect x="1028.0" y="747.6" width="13" height="13" fill="#e6e6e6" stroke="#333" stroke-width="2.600"/>
<rect x="919.4" y="825.4" width="13" height="13" fill="#e6e6e6" stroke="#333" stroke-width="2.600"/>
<rect x="803.8" y="690.0" width="13" height="13" fill="#e6e6e6" stroke="#333" stroke-width="2.600"/>
<rect x="672.6" y="645.4" width="9" height="9" fill="#2f2f2f"/>
<rect x="858.7" y="678.8" width="9" height="9" fill="#2f2f2f"/>
<rect x="745.4" y="737.7" width="9" height="9" fill="#2f2f2f"/>
<rect x="979.0" y="786.5" width="9" height="9" fill="#2f2f2f"/>
<path d="M810 636L803 652Q810 655 817 652z" fill="#1e1e1e"/>
<path d="M810 703V712" stroke="#333" stroke-dasharray="2 2"/>
<g transform="translate(676.5,617.8) rotate(-10)"><path d="M-10 4Q0 -8 10 4" fill="none" stroke="#333" stroke-width="1.500"/><path d="M-13 2l3 6 3-5zM13 2l-3 6-3-5z" fill="#333"/></g>
<g transform="translate(863.8,649.3) rotate(15)"><path d="M-10 4Q0 -8 10 4" fill="none" stroke="#333" stroke-width="1.500"/><path d="M-13 2l3 6 3-5zM13 2l-3 6-3-5z" fill="#333"/></g>
<g transform="translate(1007,800.4) rotate(-20)"><path d="M-10 4Q0 -8 10 4" fill="none" stroke="#333" stroke-width="1.500"/><path d="M-13 2l3 6 3-5zM13 2l-3 6-3-5z" fill="#333"/></g>
<path d="M893 840L910 850 893 853z" fill="#2a2d30"/><path d="M600 688L592 686 596 680z" fill="#2a4a5a"/>
<path d="M958 834L963 842 958 850 953 842z" fill="#2a2d30"/>
<rect x="357" y="631" width="54.5" height="31" rx="3" fill="#e3e4e6" opacity="1" stroke="#c9cbcd" stroke-width=".8"/><text x="384.25" y="652.1" font-size="15.5" font-family="Liberation Sans" fill="#222" text-anchor="middle">83.99</text>
<rect x="604" y="614" width="54" height="31" rx="3" fill="#e3e4e6" opacity="1" stroke="#c9cbcd" stroke-width=".8"/><text x="631.0" y="635.1" font-size="15.5" font-family="Liberation Sans" fill="#222" text-anchor="middle">50.00</text>
<rect x="246.5" y="738.5" width="54.19999999999999" height="29.899999999999977" rx="3" fill="#fffaf3" opacity="0.92" stroke="#c9cbcd" stroke-width=".8"/><text x="273.6" y="759.0500000000001" font-size="15.5" font-family="Liberation Sans" fill="#222" text-anchor="middle">58.00</text>
<rect x="665.5" y="755.4" width="63.89999999999998" height="30.800000000000068" rx="3" fill="#e3e4e6" opacity="1" stroke="#c9cbcd" stroke-width=".8"/><text x="697.45" y="776.4" font-size="15.5" font-family="Liberation Sans" fill="#222" text-anchor="middle">123.00</text>
<rect x="983.5" y="849.2" width="46.5" height="30.59999999999991" rx="3" fill="#ebecee" opacity="1" stroke="#c9cbcd" stroke-width=".8"/><text x="1006.75" y="870.1" font-size="15.5" font-family="Liberation Sans" fill="#222" text-anchor="middle">5.00</text>
<rect x="1037" y="884.8" width="46.299999999999955" height="31.200000000000045" rx="3" fill="#ebecee" opacity="1" stroke="#c9cbcd" stroke-width=".8"/><text x="1060.15" y="906.0" font-size="15.5" font-family="Liberation Sans" fill="#222" text-anchor="middle">0.00</text>
</g></svg>
<svg style="position:absolute;left:0;top:210px" width="240" height="420">
<defs><linearGradient id="cubeL" x1="0" y1="0" x2="0" y2="1"><stop offset="0" stop-color="#fafafa"/><stop offset="1" stop-color="#d4d4d4"/></linearGradient><linearGradient id="cubeR" x1="0" y1="0" x2="0" y2="1"><stop offset="0" stop-color="#f4f4f4"/><stop offset="1" stop-color="#cfcfcf"/></linearGradient></defs>
<polygon points="34.400,107.800 79.400,133.300 123.300,107.800 121,113 80,139.400 36.700,112" fill="#c6c6c6"/>
<polygon points="29.400,46.700 77.800,35 128.300,47.800 80,63.300" fill="#fbfbfb" stroke="#c8c8c8" stroke-width="1.200"/>
<polygon points="29.400,46.700 80,63.300 79.400,133.300 34.400,107.800" fill="url(#cubeL)" stroke="#c8c8c8" stroke-width="1.200"/>
<polygon points="80,63.300 128.300,47.800 123.300,107.800 79.400,133.300" fill="url(#cubeR)" stroke="#c8c8c8" stroke-width="1.200"/>
<text x="0" y="0" font-size="14" font-family="Liberation Sans" font-weight="bold" fill="#9da1a6" text-anchor="middle" transform="translate(55.600,95) rotate(20) scale(0.82,1)">FRONT</text>
<text x="0" y="0" font-size="14" font-family="Liberation Sans" font-weight="bold" fill="#9da1a6" text-anchor="middle" transform="translate(104.500,95) rotate(-27) scale(0.82,1)">RIGHT</text>
<text x="0" y="0" font-size="7" font-family="Liberation Sans" font-weight="bold" fill="#b0b4b8" text-anchor="middle" transform="translate(80,50) rotate(12) scale(1,0.6)">TOP</text>
<circle cx="43.500" cy="181" r="20.500" fill="#fbfbfb" stroke="#b8b8b8" stroke-width="1"/>
<circle cx="43.500" cy="234" r="20.500" fill="#fbfbfb" stroke="#b8b8b8" stroke-width="1"/>
<circle cx="43.500" cy="286" r="20.500" fill="#fbfbfb" stroke="#b8b8b8" stroke-width="1"/>
<circle cx="43.500" cy="338" r="20.500" fill="#fbfbfb" stroke="#b8b8b8" stroke-width="1"/>
<circle cx="43.500" cy="391" r="20.500" fill="#fbfbfb" stroke="#b8b8b8" stroke-width="1"/>
<path d="M36 182l7.500-7 7.500 7M38.500 180v9h3.500v-5h3v5h3.500v-9" fill="none" stroke="#a9a9a9" stroke-width="1.400"/>
<path d="M35 230v-5h5M47 225h5v5M52 238v5h-5M40 243h-5v-5" fill="none" stroke="#a9a9a9" stroke-width="1.500"/>
<path d="M36 286h15M43.500 278.500v15" stroke="#8f8f8f" stroke-width="1.800"/>
<path d="M36 338h15" stroke="#8f8f8f" stroke-width="1.800"/>
<path d="M37 385l6.500-4 6.500 4v7l-6.500 4-6.500-4zM37 385l6.500 4 6.500-4M43.500 389v7M35 392l8.500 8 8.500-8" fill="none" stroke="#a9a9a9" stroke-width="1.200"/>
</svg>
<div style="position:absolute;left:1450px;top:950px;width:112px;height:25px;background:#ebecee;border:1px solid #dcdee2;border-radius:2px;color:#5d6672;font-size:14px;line-height:25px;text-align:center">Edit Grid</div>
<div style="position:absolute;left:1396px;top:993px;color:#5d6672;font-size:14px;line-height:20px">Snap Grid</div>
<div style="position:absolute;left:1473px;top:990px;width:88px;height:25px;background:#ebecee;border:1px solid #dcdee2;border-radius:2px;color:#5d6672;font-size:14px;line-height:26px"><span style="margin-left:10px">1.0 mm</span><svg style="position:absolute;left:68px;top:9px" width="10" height="6"><path d="M1 5h7L4.500 0z" fill="#333"/></svg></div>
<div style="position:absolute;left:1575px;top:210px;width:345px;height:820px;background:#f0f0f3"></div>
<div style="position:absolute;left:1575px;top:309px;width:345px;height:1px;background:#dcdfe4"></div>
<svg style="position:absolute;left:1575px;top:210px" width="345" height="820">
<g fill="none" stroke="#1a8fc4"><path d="M36 19.500L77.500 17 77.500 60.500 38 56z" stroke-width="2.500"/>
<path d="M44.3 19.0L45.9 56.9" stroke-width="1"/>
<path d="M36.4 26.8L77.500 25.7" stroke-width="1"/>
<path d="M52.6 18.5L53.8 57.8" stroke-width="1"/>
<path d="M36.8 34.1L77.500 34.4" stroke-width="1"/>
<path d="M60.9 18.0L61.7 58.7" stroke-width="1"/>
<path d="M37.2 41.4L77.500 43.1" stroke-width="1"/>
<path d="M69.2 17.5L69.6 59.6" stroke-width="1"/>
<path d="M37.6 48.7L77.500 51.8" stroke-width="1"/>
</g>
<path d="M152.500 20h9.500l1 29.500 30.500 2v10.500l-39-2.500z" fill="none" stroke="#1a8fc4" stroke-width="2.500" stroke-linejoin="round"/>
<g stroke="#1a8fc4" stroke-width="1.300"><path d="M156 27h4M156 33h4M156 39h3M156 45h4M168 50v4M176 50.500v3M184 51v4"/></g>
<path d="M275 18.500h29.500a3 3 0 0 1 3 3v26.500a3 3 0 0 1-3 3H298l-7 9-6.500-9H275a3 3 0 0 1-3-3V21.500a3 3 0 0 1 3-3z" fill="none" stroke="#1a8fc4" stroke-width="2.500" stroke-linejoin="round"/>
<g stroke="#1a8fc4" stroke-width="1.500"><path d="M283 29h15M283 34h14M283 39h15M283 44h12"/></g>
<rect x="329" y="199" width="10" height="170" rx="5" fill="#c1c1c1"/>
</svg>
<div style="position:absolute;left:1575px;top:279px;width:115px;text-align:center;font-size:14.5px;line-height:20px;color:#4d5b6a;letter-spacing:0.4px">Workplane</div>
<div style="position:absolute;left:1690px;top:279px;width:115px;text-align:center;font-size:14.5px;line-height:20px;color:#4d5b6a;letter-spacing:0.4px">Ruler</div>
<div style="position:absolute;left:1805px;top:279px;width:115px;text-align:center;font-size:14.5px;line-height:20px;color:#4d5b6a;letter-spacing:0.4px">Notes</div>
<div style="position:absolute;left:1582px;top:318px;width:330px;height:75px;background:#f3f3f6;border:1px solid #e1e3e7;border-radius:3px;box-shadow:0 1px 2px rgba(0,0,0,0.08)"></div>
<div style="position:absolute;left:1595px;top:328px;font-size:14.2px;line-height:20px;color:#5d6874">Tinkercad</div>
<div style="position:absolute;left:1596px;top:354px;font-size:18.2px;line-height:26px;color:#4a5968;letter-spacing:0.3px">Basic Shapes</div>
<svg style="position:absolute;left:1875px;top:350px" width="20" height="14"><path d="M4 3.500h12l-6 6.500z" fill="#111"/></svg>
<div style="position:absolute;left:1582px;top:408px;width:330px;height:1px;background:#dcdfe4"></div>
<div style="position:absolute;left:1594px;top:604px;width:147px;height:175px;border:1px solid #5b8fd6;border-radius:3px;background:#f2f2f5"></div>
<svg style="position:absolute;left:1575px;top:410px" width="330" height="620">
<defs><pattern id="st2" patternUnits="userSpaceOnUse" width="12" height="12" patternTransform="rotate(-45)"><rect width="12" height="12" fill="#b7bcc4"/><rect width="6" height="12" fill="#d3d8e0"/></pattern></defs>
<polygon points="73.9,31.1 137.3,39.9 119.8,72.7 46.9,61.8" fill="url(#st2)"/>
<polygon points="46.9,61.8 119.8,72.7 116.9,134.7 51.3,120.8" fill="url(#st2)"/>
<polygon points="46.9,61.8 119.8,72.7 116.9,134.7 51.3,120.8" fill="#000" opacity=".1"/>
<polygon points="119.8,72.7 137.3,39.9 134.4,96.0 116.9,134.7" fill="url(#st2)"/>
<polygon points="73.9,31.1 137.3,39.9 134.4,96.0 116.9,134.7 51.3,120.8 46.9,61.8" fill="none" stroke="#72767c" stroke-width="1.500" stroke-linejoin="round"/>
<path d="M46.9 61.8L119.8 72.7L137.3 39.9M119.8 72.7L116.9 134.7" fill="none" stroke="#8a8e94" stroke-width=".8"/>
<path d="M214.600 51.600V124A36.500 14 0 0 0 286 124V51.600z" fill="url(#st2)"/>
<path d="M214.600 51.600V124A36.500 14 0 0 0 250 138V51.600z" fill="#000" opacity=".1"/>
<path d="M214.600 51.600V124A36.500 14 0 0 0 286 124V51.600" fill="none" stroke="#72767c" stroke-width="1.500"/>
<ellipse cx="250.300" cy="51.600" rx="36" ry="16.800" fill="url(#st2)" stroke="#72767c" stroke-width="1.500"/>
<polygon points="73.6,220.7 137.8,230.5 119.0,262.9 46.4,251.9" fill="#c81a28"/>
<polygon points="46.4,251.9 119.0,262.9 117.7,324.5 50.3,310.8" fill="#a8141f"/>
<polygon points="119.0,262.9 137.8,230.5 135.2,285.6 117.7,324.5" fill="#bd1a28"/>
<polygon points="73.6,220.7 137.8,230.5 135.2,285.6 117.7,324.5 50.3,310.8 46.4,251.9" fill="none" stroke="#7a0a12" stroke-width="1.300" stroke-linejoin="round"/>
<path d="M46.4 251.9L119.0 262.9L137.8 230.5M119.0 262.9L117.7 324.5" fill="none" stroke="#8a1018" stroke-width=".8"/>
<defs><linearGradient id="og" x1="0" x2="1"><stop offset="0" stop-color="#7a4210"/><stop offset=".45" stop-color="#c86a18"/><stop offset=".8" stop-color="#de7820"/><stop offset="1" stop-color="#cf6c18"/></linearGradient><radialGradient id="sph" cx=".65" cy=".3" r=".75"><stop offset="0" stop-color="#0aa6e6"/><stop offset=".7" stop-color="#0a86c0"/><stop offset="1" stop-color="#0a6a9a"/></radialGradient></defs>
<path d="M214.500 241.100V304A36 15 0 0 0 286 304V241.100z" fill="url(#og)" stroke="#8a4a10" stroke-width="1"/>
<ellipse cx="250.500" cy="241.100" rx="36" ry="16.900" fill="#d6701a" stroke="#8a4a10" stroke-width="1"/>
<circle cx="94" cy="462" r="35" fill="url(#sph)" stroke="#0a5a88" stroke-width="1"/>
<path d="M220 464.400C220 452.800 231.700 450.200 234.300 459.300C235.600 442.400 247.200 439.800 252.400 451.500L275.700 476.100M275.700 476.100C268 464.400 262.800 448.900 269.300 439.800C274.500 437.200 278.300 441.100 277 446.300" transform="translate(0,28)" fill="none" stroke="#7398b4" stroke-width="10" stroke-linecap="round" stroke-linejoin="round"/>
<path d="M220 464.400C220 452.800 231.700 450.200 234.300 459.300C235.600 442.400 247.200 439.800 252.400 451.500L275.700 476.100M275.700 476.100C268 464.400 262.800 448.900 269.300 439.800C274.500 437.200 278.300 441.100 277 446.300" transform="translate(0,26)" fill="none" stroke="#7398b4" stroke-width="10" stroke-linecap="round" stroke-linejoin="round"/>
<path d="M220 464.400C220 452.800 231.700 450.200 234.300 459.300C235.600 442.400 247.200 439.800 252.400 451.500L275.700 476.100M275.700 476.100C268 464.400 262.800 448.900 269.300 439.800C274.500 437.200 278.300 441.100 277 446.300" transform="translate(0,24)" fill="none" stroke="#7398b4" stroke-width="10" stroke-linecap="round" stroke-linejoin="round"/>
<path d="M220 464.400C220 452.800 231.700 450.200 234.300 459.300C235.600 442.400 247.200 439.800 252.400 451.500L275.700 476.100M275.700 476.100C268 464.400 262.800 448.900 269.300 439.800C274.500 437.200 278.300 441.100 277 446.300" transform="translate(0,22)" fill="none" stroke="#7398b4" stroke-width="10" stroke-linecap="round" stroke-linejoin="round"/>
<path d="M220 464.400C220 452.800 231.700 450.200 234.300 459.300C235.600 442.400 247.200 439.800 252.400 451.500L275.700 476.100M275.700 476.100C268 464.400 262.800 448.900 269.300 439.800C274.500 437.200 278.300 441.100 277 446.300" transform="translate(0,20)" fill="none" stroke="#7398b4" stroke-width="10" stroke-linecap="round" stroke-linejoin="round"/>
<path d="M220 464.400C220 452.800 231.700 450.200 234.300 459.300C235.600 442.400 247.200 439.800 252.400 451.500L275.700 476.100M275.700 476.100C268 464.400 262.800 448.900 269.300 439.800C274.500 437.200 278.300 441.100 277 446.300" transform="translate(0,18)" fill="none" stroke="#7398b4" stroke-width="10" stroke-linecap="round" stroke-linejoin="round"/>
<path d="M220 464.400C220 452.800 231.700 450.200 234.300 459.300C235.600 442.400 247.200 439.800 252.400 451.500L275.700 476.100M275.700 476.100C268 464.400 262.800 448.900 269.300 439.800C274.500 437.200 278.300 441.100 277 446.300" transform="translate(0,16)" fill="none" stroke="#7398b4" stroke-width="10" stroke-linecap="round" stroke-linejoin="round"/>
<path d="M220 464.400C220 452.800 231.700 450.200 234.300 459.300C235.600 442.400 247.200 439.800 252.400 451.500L275.700 476.100M275.700 476.100C268 464.400 262.800 448.900 269.300 439.800C274.500 437.200 278.300 441.100 277 446.300" transform="translate(0,14)" fill="none" stroke="#7398b4" stroke-width="10" stroke-linecap="round" stroke-linejoin="round"/>
<path d="M220 464.400C220 452.800 231.700 450.200 234.300 459.300C235.600 442.400 247.200 439.800 252.400 451.500L275.700 476.100M275.700 476.100C268 464.400 262.800 448.900 269.300 439.800C274.500 437.200 278.300 441.100 277 446.300" transform="translate(0,12)" fill="none" stroke="#7398b4" stroke-width="10" stroke-linecap="round" stroke-linejoin="round"/>
<path d="M220 464.400C220 452.800 231.700 450.200 234.300 459.300C235.600 442.400 247.200 439.800 252.400 451.500L275.700 476.100M275.700 476.100C268 464.400 262.800 448.900 269.300 439.800C274.500 437.200 278.300 441.100 277 446.300" transform="translate(0,10)" fill="none" stroke="#7398b4" stroke-width="10" stroke-linecap="round" stroke-linejoin="round"/>
<path d="M220 464.400C220 452.800 231.700 450.200 234.300 459.300C235.600 442.400 247.200 439.800 252.400 451.500L275.700 476.100M275.700 476.100C268 464.400 262.800 448.900 269.300 439.800C274.500 437.200 278.300 441.100 277 446.300" transform="translate(0,8)" fill="none" stroke="#7398b4" stroke-width="10" stroke-linecap="round" stroke-linejoin="round"/>
<path d="M220 464.400C220 452.800 231.700 450.200 234.300 459.300C235.600 442.400 247.200 439.800 252.400 451.500L275.700 476.100M275.700 476.100C268 464.400 262.800 448.900 269.300 439.800C274.500 437.200 278.300 441.100 277 446.300" transform="translate(0,6)" fill="none" stroke="#7398b4" stroke-width="10" stroke-linecap="round" stroke-linejoin="round"/>
<path d="M220 464.400C220 452.800 231.700 450.200 234.300 459.300C235.600 442.400 247.200 439.800 252.400 451.500L275.700 476.100M275.700 476.100C268 464.400 262.800 448.900 269.300 439.800C274.500 437.200 278.300 441.100 277 446.300" transform="translate(0,4)" fill="none" stroke="#7398b4" stroke-width="10" stroke-linecap="round" stroke-linejoin="round"/>
<path d="M220 464.400C220 452.800 231.700 450.200 234.300 459.300C235.600 442.400 247.200 439.800 252.400 451.500L275.700 476.100M275.700 476.100C268 464.400 262.800 448.900 269.300 439.800C274.500 437.200 278.300 441.100 277 446.300" transform="translate(0,2)" fill="none" stroke="#7398b4" stroke-width="10" stroke-linecap="round" stroke-linejoin="round"/>
<path d="M220 464.400C220 452.800 231.700 450.200 234.300 459.300C235.600 442.400 247.200 439.800 252.400 451.500L275.700 476.100M275.700 476.100C268 464.400 262.800 448.900 269.300 439.800C274.500 437.200 278.300 441.100 277 446.300" fill="none" stroke="#9cc3e0" stroke-width="10" stroke-linecap="round" stroke-linejoin="round"/>
<path d="M149.500 203l3.300 6.700 7.300 1-5.300 5.200 1.300 7.300-6.600-3.500-6.600 3.500 1.300-7.300-5.300-5.200 7.300-1z" fill="none" stroke="#c4c8ce" stroke-width="1.200"/>
</svg>
<div style="position:absolute;left:1609px;top:553px;width:120px;text-align:center;font-size:16px;line-height:20px;color:#4d5b6a;letter-spacing:0.3px">Box</div>
<div style="position:absolute;left:1765px;top:553px;width:120px;text-align:center;font-size:16px;line-height:20px;color:#4d5b6a;letter-spacing:0.3px">Cylinder</div>
<div style="position:absolute;left:1609px;top:743px;width:120px;text-align:center;font-size:16px;line-height:20px;color:#4d5b6a;letter-spacing:0.3px">Box</div>
<div style="position:absolute;left:1765px;top:743px;width:120px;text-align:center;font-size:16px;line-height:20px;color:#4d5b6a;letter-spacing:0.3px">Cylinder</div>
<div style="position:absolute;left:1609px;top:934px;width:120px;text-align:center;font-size:16px;line-height:20px;color:#4d5b6a;letter-spacing:0.3px">Sphere</div>
<div style="position:absolute;left:1765px;top:934px;width:120px;text-align:center;font-size:16px;line-height:20px;color:#4d5b6a;letter-spacing:0.3px">Scribble</div>
<div style="position:absolute;left:1240px;top:225px;width:320px;height:488px;background:#f9f9f9;border-radius:3px;box-shadow:0 1px 3px rgba(0,0,0,0.18)"></div>
<div style="position:absolute;left:1240px;top:225px;width:320px;height:51px;background:#fff;border-bottom:1px solid #e1e4e8;border-radius:3px 3px 0 0"></div>
<div style="position:absolute;left:1290px;top:226px;width:1px;height:50px;background:#e1e4e8"></div>
<div style="position:absolute;left:1304px;top:235px;font-size:18px;line-height:28px;font-weight:bold;color:#34475b">Shape</div>
<svg style="position:absolute;left:1240px;top:225px" width="320" height="488">
<path d="M15.500 28L24.500 17 33.500 28z" fill="#34475b" stroke="#34475b" stroke-width="1.500" stroke-linejoin="round"/>
<rect x="236" y="20" width="16" height="13" rx="2" fill="#5a6b7d"/><path d="M246 20v-5a4.500 4.500 0 0 1 9 0v2" fill="none" stroke="#5a6b7d" stroke-width="2.200"/>
<path d="M282 28c-2.500-2-4-4.300-4-7a8 8 0 0 1 16 0c0 2.700-1.500 5-4 7v3h-8z" fill="#d2d7dc" stroke="#8b949e" stroke-width="1.300"/><path d="M282.500 33.500h7M283.500 36h5" stroke="#8b949e" stroke-width="1.500"/>
<circle cx="100" cy="112.500" r="29.500" fill="#fff" stroke="#4a8fe0" stroke-width="2"/><circle cx="100" cy="112.500" r="25" fill="#e81c2c"/>
<defs><pattern id="stripes" patternUnits="userSpaceOnUse" width="9" height="9" patternTransform="rotate(45)"><rect width="9" height="9" fill="#c9c9c9"/><rect width="4.500" height="9" fill="#a9a9a9"/></pattern></defs>
<circle cx="220" cy="112.500" r="30" fill="#fff"/><circle cx="220" cy="112.500" r="25" fill="url(#stripes)"/>
<rect x="15" y="219" width="290" height="1" fill="#e4e6e9"/>
<rect x="124" y="254.3" width="100" height="2.500" fill="#ececec"/>
<circle cx="113.3" cy="255.3" r="7.300" fill="#fff" stroke="#111" stroke-width="1.500"/>
<rect x="124" y="303.8" width="100" height="2.500" fill="#ececec"/>
<rect x="114.8" y="303.8" width="49.60000000000001" height="2.500" fill="#4a8fe0"/>
<circle cx="164.4" cy="304.8" r="7.300" fill="#fff" stroke="#111" stroke-width="1.500"/>
<rect x="124" y="353.50000000000006" width="100" height="2.500" fill="#ececec"/>
<circle cx="123.2" cy="354.50000000000006" r="7.300" fill="#fff" stroke="#111" stroke-width="1.500"/>
<rect x="124" y="402.8" width="100" height="2.500" fill="#ececec"/>
<circle cx="123.2" cy="403.8" r="7.300" fill="#fff" stroke="#111" stroke-width="1.500"/>
<rect x="124" y="452.3" width="100" height="2.500" fill="#ececec"/>
<circle cx="123.2" cy="453.3" r="7.300" fill="#fff" stroke="#111" stroke-width="1.500"/>
</svg>
<div style="position:absolute;left:1255px;top:469.5px;font-size:14.5px;line-height:20px;color:#56606c;letter-spacing:0.3px">Radius</div>
<div style="position:absolute;left:1480px;width:51px;text-align:right;top:469.5px;font-size:13px;line-height:20px;color:#56606c">0</div>
<div style="position:absolute;left:1255px;top:519px;font-size:14.5px;line-height:20px;color:#56606c;letter-spacing:0.3px">Steps</div>
<div style="position:absolute;left:1480px;width:51px;text-align:right;top:519px;font-size:13px;line-height:20px;color:#56606c">10</div>
<div style="position:absolute;left:1255px;top:568.7px;font-size:14.5px;line-height:20px;color:#56606c;letter-spacing:0.3px">Length</div>
<div style="position:absolute;left:1480px;width:51px;text-align:right;top:568.7px;font-size:13px;line-height:20px;color:#56606c">20</div>
<div style="position:absolute;left:1255px;top:618px;font-size:14.5px;line-height:20px;color:#56606c;letter-spacing:0.3px">Width</div>
<div style="position:absolute;left:1480px;width:51px;text-align:right;top:618px;font-size:13px;line-height:20px;color:#56606c">20</div>
<div style="position:absolute;left:1255px;top:667.5px;font-size:14.5px;line-height:20px;color:#56606c;letter-spacing:0.3px">Height</div>
<div style="position:absolute;left:1480px;width:51px;text-align:right;top:667.5px;font-size:13px;line-height:20px;color:#56606c">20</div>
<div style="position:absolute;left:1300px;top:378px;width:80px;text-align:center;font-size:14.5px;line-height:20px;color:#56606c;letter-spacing:0.3px">Solid</div>
<div style="position:absolute;left:1420px;top:378px;width:80px;text-align:center;font-size:14.5px;line-height:20px;color:#56606c;letter-spacing:0.3px">Hole</div>
<div style="position:absolute;left:1563px;top:591px;width:20px;height:58px;background:#f3f3f5;border:1px solid #dfe1e5;border-right:none"></div>
<svg style="position:absolute;left:1563px;top:591px" width="20" height="58"><path d="M7 17l6 12-6 12" fill="none" stroke="#111" stroke-width="2"/></svg>
<div style="position:absolute;left:0;top:1030px;width:1920px;height:50px;background:linear-gradient(90deg,#1e1a18 0%,#2b2420 30%,#342a23 60%,#2f2723 100%)"></div>
<div style="position:absolute;left:60px;top:1030px;width:430px;height:50px;background:#f0f0f0;border:1px solid #d9d9d9;box-sizing:border-box"></div>
<div style="position:absolute;left:110px;top:1042px;font-size:18.5px;line-height:26px;color:#222;white-space:nowrap">Type here to search</div>
<svg style="position:absolute;left:0;top:1028.5px" width="1920" height="52">
<path d="M20 16.500l8-1.100v7.600h-8zM29.500 15.200l11-1.500v9.300h-11zM20 24.500h8v7.600l-8-1.100zM29.500 24.500h11v9.300l-11-1.500z" fill="#fff"/>
<circle cx="88" cy="21" r="6.500" fill="none" stroke="#222" stroke-width="1.500"/><path d="M83.500 26l-8 8.500" stroke="#222" stroke-width="1.600"/>
<circle cx="519.500" cy="25.500" r="8.200" fill="none" stroke="#fff" stroke-width="2.300"/>
<path d="M570.500 10h13M570.500 38h13M571.500 15h11v18h-11z" fill="none" stroke="#fff" stroke-width="1.500"/><path d="M588.500 10v28" stroke="#fff" stroke-width="1.500"/><rect x="586.500" y="17" width="4" height="4" fill="#fff"/>
<rect x="924" y="1.5" width="61" height="50" fill="#4a423d"/>
<rect x="619" y="48.5" width="47" height="3" fill="#76b9ed"/>
<rect x="667" y="48.5" width="3" height="3" fill="#76b9ed"/>
<rect x="924" y="48.5" width="61" height="3" fill="#76b9ed"/>
<rect x="1301" y="48.5" width="50" height="3" fill="#76b9ed"/>
<rect x="1363" y="48.5" width="51" height="3" fill="#76b9ed"/>
<rect x="1425" y="48.5" width="51" height="3" fill="#76b9ed"/>
<path d="M630 15h10l2 2h17v22h-29z" fill="#e8b53a"/><path d="M630 19h29v20h-29z" fill="#fcd36a"/><path d="M638 27h13v11h-3v-7h-7v7h-3z" fill="#3a8ee0"/>
<path d="M691 16h29v25h-29z" fill="#fafafa"/><path d="M698 16v-4a7.500 5 0 0 1 15 0v4" fill="none" stroke="#ddd" stroke-width="1.800"/><rect x="700" y="24" width="5" height="5" fill="#f25022"/><rect x="706" y="24" width="5" height="5" fill="#7fba00"/><rect x="700" y="30" width="5" height="5" fill="#00a4ef"/><rect x="706" y="30" width="5" height="5" fill="#ffb900"/>
<circle cx="768" cy="26" r="14" fill="#1a3a6a"/><circle cx="768" cy="26" r="14" fill="url(#stg)"/><circle cx="772.500" cy="22" r="4.500" fill="none" stroke="#fff" stroke-width="2"/><circle cx="764" cy="31" r="3" fill="none" stroke="#fff" stroke-width="1.800"/><path d="M754 27l10 4 6-6" fill="none" stroke="#fff" stroke-width="3"/>
<defs><linearGradient id="stg" x1="0" y1="0" x2="0" y2="1"><stop offset="0" stop-color="#1b9fe0" stop-opacity=".9"/><stop offset="1" stop-color="#10205a" stop-opacity=".2"/></linearGradient></defs>
<path d="M815 12h30l-2 28h-26z" fill="#1a1e22"/><path d="M815 12l3 20M845 12l-3 20" stroke="#18a0d0" stroke-width="1.500"/><path d="M822 22l8 4 8-4-3 12-5-4-5 4z" fill="#7a7e82"/>
<path d="M877 20l14-9 14 9v19h-28z" fill="#1c88d8"/><path d="M877 20l14 9 14-9" fill="#6ac0f5"/><path d="M877 39l14-10 14 10z" fill="#3aa8ee"/>
<circle cx="907" cy="35.500" r="8.500" fill="#2b2420" stroke="#cfcfcf" stroke-width="1"/><text x="907" y="41" font-size="13" font-weight="bold" font-family="Liberation Sans" fill="#fff" text-anchor="middle">5</text>
<circle cx="954" cy="26" r="13.500" fill="#db4437"/><path d="M954 26L942.300 32.750A13.500 13.500 0 0 0 960.750 37.690z" fill="#0f9d58"/><path d="M954 26L965.690 32.750A13.500 13.500 0 0 0 954 12.500H954z" fill="#ffcd40"/><path d="M954 26l11.690 6.750A13.500 13.500 0 0 1 954 39.500 13.500 13.500 0 0 1 942.300 32.750z" fill="#0f9d58"/><path d="M954 12.500A13.500 13.500 0 0 1 965.690 32.750L954 26z" fill="#ffcd40"/><circle cx="954" cy="26" r="6" fill="#fff"/><circle cx="954" cy="26" r="4.700" fill="#4285f4"/>
<rect x="1001" y="12" width="30" height="30" fill="#f7d9b5"/><path d="M1009 16h14v5h-9v4h7v5h-7v8h-5z" fill="#f08a20"/><text x="1025" y="40" font-size="6" font-family="Liberation Sans" fill="#e06a10">360</text>
<circle cx="1077.500" cy="26.500" r="14" fill="#17a1a5"/><path d="M1070.500 26.500a3.500 3 0 1 1 7 0 3.500 3 0 1 1 7 0 3.500 3 0 1 1-7 0 3.500 3 0 1 1-7 0z" fill="none" stroke="#fff" stroke-width="2"/>
<rect x="1126" y="12" width="28" height="28" rx="8" fill="#3a8df3"/><path d="M1131 20h11a2 2 0 0 1 2 2v9h-11a2 2 0 0 1-2-2zM1145 24l5-3.500v11l-5-3.500z" fill="#fff"/>
<path d="M1189 18l8-7h21v20l-8 10h-21z" fill="#1ea0e0"/><path d="M1212 19a9 9 0 1 0 0 13" fill="none" stroke="#fff" stroke-width="4.500"/>
<path d="M1250 26l14-14 14 14-14 14z" fill="#10141a"/><path d="M1264 15l-7 13h6l-3 9 8-13h-6z" fill="#3aa0ee"/>
<rect x="1311" y="12" width="30" height="29" rx="6" fill="#1e1e1e"/><path d="M1326 16l-11 20h22zM1326 23l-5.500 10h11z" fill="none" stroke="#eee" stroke-width="1.300"/>
<rect x="1373" y="13" width="29" height="28" rx="2" fill="#185abd"/><rect x="1387" y="13" width="15" height="9" fill="#41a5ee"/><rect x="1387" y="22" width="15" height="9" fill="#2b7cd3"/><rect x="1372" y="19" width="16" height="16" rx="1" fill="#103f91"/><text x="1380" y="32" font-size="12" font-weight="bold" font-family="Liberation Sans" fill="#fff" text-anchor="middle">W</text>
<path d="M1442 18a12 12 0 1 0 20 3" fill="none" stroke="#e84a2a" stroke-width="3"/><path d="M1452 12l-2 22M1452 12l3 22" stroke="#ccc" stroke-width="3"/><circle cx="1441" cy="38" r="3.500" fill="none" stroke="#2a9be8" stroke-width="2"/><circle cx="1458" cy="38" r="3.500" fill="none" stroke="#2a9be8" stroke-width="2"/>
<path d="M1513 29l8-8 8 8" fill="none" stroke="#fff" stroke-width="1.500"/>
<rect x="1547" y="21" width="9" height="11" rx="1" fill="none" stroke="#fff" stroke-width="1.300"/><path d="M1556 24l4-2v9l-4-2" fill="none" stroke="#fff" stroke-width="1.300"/><path d="M1548 19q4-2 8 0M1548 34q4 2 8 0" fill="none" stroke="#fff" stroke-width="1"/>
<path d="M1573 33h18a4 4 0 0 0 0-8 6 6 0 0 0-11-2 4.500 4.500 0 0 0-7 4 3 3 0 0 0 0 6z" fill="#d8d8d8"/>
<rect x="1602" y="23" width="19" height="10" fill="none" stroke="#fff" stroke-width="1.300"/><rect x="1604" y="25" width="15" height="6" fill="#fff"/><rect x="1621" y="26" width="2" height="4" fill="#fff"/><path d="M1603 22v-4M1607 22v-4" stroke="#fff" stroke-width="1.200"/>
<path d="M1636 36a13 13 0 0 1 13-13M1639.500 36a9.500 9.500 0 0 1 9.500-9.500M1643 36a6 6 0 0 1 6-6" fill="none" stroke="#fff" stroke-width="1.300"/><circle cx="1649" cy="35" r="1.500" fill="#fff"/>
<path d="M1662 22h3l5-4v16l-5-4h-3z" fill="none" stroke="#fff" stroke-width="1.300"/><path d="M1673 23a5 5 0 0 1 0 7M1676 20a9 9 0 0 1 0 13M1679 18a12 12 0 0 1 0 17" fill="none" stroke="#fff" stroke-width="1.300"/>
<path d="M1698 19l5-3 5 3-5 3zM1708 19l5-3 5 3-5 3zM1703 22l5 3 5-3M1708 25l5 3-5 3" fill="#fff"/><rect x="1692" y="27" width="11" height="12" rx="1.500" fill="#e01a2a"/><text x="1697.500" y="37" font-size="10" font-weight="bold" font-family="Liberation Sans" fill="#fff" text-anchor="middle">4</text>
<path d="M1869 17h19v13h-14l-5 4z" fill="#fff"/><path d="M1873 21h11M1873 24h11M1873 27h8" stroke="#333" stroke-width="1"/><circle cx="1886" cy="34" r="8.500" fill="#2b2420" stroke="#ccc" stroke-width="1"/><text x="1886" y="39" font-size="12" font-family="Liberation Sans" fill="#fff" text-anchor="middle">1</text>
<rect x="1914" y="0" width="1" height="50" fill="#6a6460"/>
</svg>
<div style="position:absolute;left:1724px;top:1044px;font-size:14.5px;line-height:22px;color:#fff">ENG</div>
<div style="position:absolute;left:1758px;top:1032px;width:100px;text-align:center;font-size:15px;line-height:22px;color:#fff">16:06</div>
<div style="position:absolute;left:1758px;top:1055px;width:100px;text-align:center;font-size:15px;line-height:22px;color:#fff">08/06/2021</div>
</body></html>
